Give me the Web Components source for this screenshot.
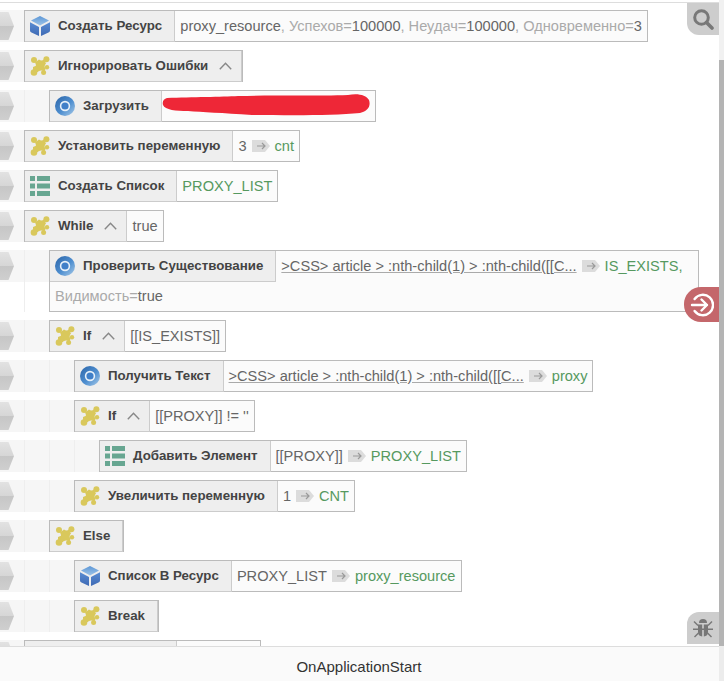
<!DOCTYPE html>
<html>
<head>
<meta charset="utf-8">
<title>OnApplicationStart</title>
<style>
  html, body { margin: 0; background: #fff; }
  .scribble { display: inline-block; vertical-align: top; margin: 3px 0 0 -5px; }
</style>
</head>
<body>
<flow-app tab="OnApplicationStart">
  <flow-row icon="cube" label="Создать Ресурс">proxy_resource<span class="lbl">, Успехов=</span>100000<span class="lbl">, Неудач=</span>100000<span class="lbl">, Одновременно=</span>3</flow-row>
  <flow-row icon="puzzle" label="Игнорировать Ошибки" open></flow-row>
  <flow-row depth="1" icon="chrome" label="Загрузить"><svg class="scribble" width="208" height="24" viewBox="0 0 208 24"><path fill="#ee2737" d="M5 4 C30 3 60 3 76 2 C110 1 160 2 186 1 C196 -1 204 1 207 6 C209 12 206 17 198 19 C170 22 120 21 90 21 C60 19 40 18 26 17 C14 17 3 16 1 11 C0 7 2 5 5 4Z"/></svg></flow-row>
  <flow-row icon="puzzle" label="Установить переменную">3<flow-arrow></flow-arrow><span class="out">cnt</span></flow-row>
  <flow-row icon="list" label="Создать Список"><span class="out">PROXY_LIST</span></flow-row>
  <flow-row icon="puzzle" label="While" open>true</flow-row>
  <flow-row depth="1" icon="chrome" label="Проверить Существование"><span class="sel">&gt;CSS&gt; article &gt; :nth-child(1) &gt; :nth-child([[C...</span><flow-arrow></flow-arrow><span class="out">IS_EXISTS,</span> <span class="lbl">Видимость=</span>true</flow-row>
  <flow-row depth="1" icon="puzzle" label="If" open>[[IS_EXISTS]]</flow-row>
  <flow-row depth="2" icon="chrome" label="Получить Текст"><span class="sel">&gt;CSS&gt; article &gt; :nth-child(1) &gt; :nth-child([[C...</span><flow-arrow></flow-arrow><span class="out">proxy</span></flow-row>
  <flow-row depth="2" icon="puzzle" label="If" open>[[PROXY]] != ''</flow-row>
  <flow-row depth="3" icon="list" label="Добавить Элемент">[[PROXY]]<flow-arrow></flow-arrow><span class="out">PROXY_LIST</span></flow-row>
  <flow-row depth="2" icon="puzzle" label="Увеличить переменную">1<flow-arrow></flow-arrow><span class="out">CNT</span></flow-row>
  <flow-row depth="1" icon="puzzle" label="Else"></flow-row>
  <flow-row depth="2" icon="cube" label="Список В Ресурс">PROXY_LIST<flow-arrow></flow-arrow><span class="out">proxy_resource</span></flow-row>
  <flow-row depth="2" icon="puzzle" label="Break"></flow-row>
  <flow-row style="--title-w:151px" icon="none" label=""><span style="display:inline-block;width:73px"></span></flow-row>
</flow-app>

<script>
const ICONS = {
  cube: `<svg width="20" height="20" viewBox="0 0 20 20"><defs><linearGradient id="t" x1="0" y1="0" x2="0" y2="1"><stop offset="0" stop-color="#5d97d6"/><stop offset="1" stop-color="#9cc3e8"/></linearGradient><linearGradient id="s" x1="0" y1="0" x2="0" y2="1"><stop offset="0" stop-color="#5a8cd2"/><stop offset="1" stop-color="#3d69b4"/></linearGradient></defs><path fill="url(#t)" d="M10 0 L19 4.6 L10 9.4 L1 4.6Z"/><path fill="url(#s)" d="M0 6.2 L9 11 V20 L1.5 16.5 Q0 15.8 0 14.5Z"/><path fill="url(#s)" d="M20 6.2 L11 11 V20 L18.5 16.5 Q20 15.8 20 14.5Z"/></svg>`,
  puzzle: `<svg width="20" height="20" viewBox="0 0 20 20"><g fill="#d9c85c"><path d="M5 6.5 L9 3.5 Q11.5 5.5 14 3.5 L16 7.5 Q13.5 10 15.5 13 L14.5 15.5 Q11 13.5 8.5 15.5 L5 14 Q7 10 5 6.5Z"/><circle cx="4" cy="4" r="3"/><circle cx="16.4" cy="3.2" r="3"/><circle cx="17" cy="11.3" r="2.2"/><circle cx="4" cy="16.5" r="3.3"/><circle cx="13.6" cy="16.4" r="2.5"/><path d="M3 11 L8 9 L8 16 L3 16Z"/></g></svg>`,
  chrome: `<svg width="20" height="20" viewBox="0 0 20 20"><defs><linearGradient id="c" x1="0" y1="0" x2="1" y2="1"><stop offset="0" stop-color="#2a64a8"/><stop offset=".55" stop-color="#4f8fd0"/><stop offset="1" stop-color="#a9cbe8"/></linearGradient></defs><circle cx="10" cy="10" r="10" fill="url(#c)"/><circle cx="10" cy="10" r="5.2" fill="#e8f1f9"/><circle cx="10" cy="10" r="3.6" fill="#3f7fc8"/></svg>`,
  list: `<svg width="20" height="20" viewBox="0 0 20 20"><g fill="#67a691"><rect x="0" y="0" width="5" height="5"/><rect x="7" y="0" width="13" height="5"/><rect x="0" y="7.5" width="5" height="5"/><rect x="7" y="7.5" width="13" height="5"/><rect x="0" y="15" width="5" height="5"/><rect x="7" y="15" width="13" height="5"/></g></svg>`,
  none: `<svg width="20" height="20"></svg>`
};

class FlowApp extends HTMLElement {
  constructor() {
    super();
    this.attachShadow({ mode: 'open' }).innerHTML = `
    <style>
      :host { display: flex; width: 724px; height: 681px; overflow: hidden; color: #666;
        font-family: "Liberation Sans", Arial, sans-serif; }
      .main { flex: 1; min-width: 0; display: flex; flex-direction: column; position: relative; padding-top: 2px; box-sizing: border-box; }
      .view { flex: 1; min-height: 0; overflow: hidden; border-top: 1px solid #ddd; padding-top: 7px; }
      .tab { flex: none; height: 34px; border-top: 1px solid #ddd; background: #fafafa; color: #333; font-size: 15px; line-height: 39px; text-align: center; padding-right: 1px; }
      .bar { width: 5px; display: flex; flex-direction: column; background: #ececec; }
      .bar i { display: block; }
      .bar .before { height: 60px; background: #f1f1f1; }
      .bar .thumb { height: 586px; background: #b4b4b4; }
      .tool { position: absolute; right: 0; display: flex; align-items: center; justify-content: center; background: #cdcdcd; box-sizing: border-box; }
      .search { top: 3px; width: 32px; height: 32px; border-bottom-left-radius: 12px; }
      .bug { top: 612px; width: 32px; height: 32px; border-top-left-radius: 12px; }
      .exit { top: 287px; width: 35px; height: 35px; background: #c4676b; border-radius: 17px 0 0 17px; }
    </style>
    <div class="main">
      <div class="view"><slot></slot></div>
      <div class="tab">${this.getAttribute('tab')}</div>
      <div class="tool search"><svg width="22" height="22" viewBox="0 0 22 22" fill="none" stroke="#787878"><circle cx="9.5" cy="9.5" r="6.8" stroke-width="3"/><path d="M14.5 14.5 L20 20" stroke-width="3.6" stroke-linecap="round"/></svg></div>
      <div class="tool exit"><svg width="24" height="24" viewBox="0 0 24 24" fill="none" stroke="#fff" stroke-width="2.4" stroke-linecap="round" stroke-linejoin="round"><path d="M4.6 6 A10.2 10.2 0 1 1 4.6 18"/><path d="M2 12 H17 M11.5 6.5 L17 12 L11.5 17.5"/></svg></div>
      <div class="tool bug"><svg width="22" height="22" viewBox="0 0 22 22" fill="#777"><path d="M7 6 A4 4 0 0 1 15 6Z"/><path d="M6 7.5 H10.2 V19.5 Q6 19 6 15Z"/><path d="M16 7.5 H11.8 V19.5 Q16 19 16 15Z"/><path d="M1 11.5 H21 V13 H1Z"/><path d="M2.5 4 L6.5 8 L5.5 9 L1.5 5Z M19.5 4 L15.5 8 L16.5 9 L20.5 5Z M6 15.5 L7 16.5 L3 20.5 L2 19.5Z M16 15.5 L15 16.5 L19 20.5 L20 19.5Z"/></svg></div>
    </div>
    <div class="bar"><i class="before"></i><i class="thumb"></i></div>`;
  }
}

class FlowRow extends HTMLElement {
  connectedCallback() {
    if (this.shadowRoot) return;
    const depth = +this.getAttribute('depth') || 0;
    const bare = this.childNodes.length === 0;
    const guides = '<i></i>'.repeat(depth);
    const chevron = this.hasAttribute('open')
      ? '<svg class="chev" width="13" height="8" viewBox="0 0 13 8" fill="none" stroke="#888" stroke-width="1.4"><path d="M0.8 7.2 L6.5 1.2 L12.2 7.2"/></svg>' : '';
    this.attachShadow({ mode: 'open' }).innerHTML = `
    <style>
      :host { display: flex; padding: 0 20px 8px 0; }
      .lead { flex: none; display: flex; background: linear-gradient(#f6f6f6, #f6f6f6) no-repeat 0 0 / 100% 32px; }
      .grip { width: 24px; height: 32px; display: block; }
      .lead i { width: 24px; border-left: 1px solid #eee; }
      .box { flex: 0 1 auto; min-width: 0; display: flow-root; border: 1px solid #bbb; background: #fbfbfb; box-sizing: border-box;
        padding: 0 ${bare ? 0 : 5}px; font-size: 14.6px; line-height: 30px; color: #666; }
      .title { float: left; height: 30px; margin: 0 ${bare ? 0 : 5}px -1px ${bare ? 0 : -5}px; width: var(--title-w, auto); background: #eee;
        border-right: 1px solid #ccc; border-bottom: 1px solid #ccc; display: flex; align-items: center; padding: 0 12px 0 5px;
        font-size: 13.3px; font-weight: bold; color: #444; white-space: nowrap; }
      :host([icon="none"]) .title { padding: 0; }
      .title svg:first-child { margin-right: 8px; flex: none; }
      .chev { margin: 0 -3px 0 11px; }
      ::slotted(.lbl) { color: #aaa; }
      ::slotted(.out) { color: #56995f; }
      ::slotted(.sel) { color: #666; white-space: nowrap; text-decoration: underline; text-decoration-color: #aaa; }
    </style>
    <div class="lead">
      <svg class="grip" viewBox="0 0 24 32"><defs><linearGradient id="g" x1="0" y1="0" x2="0" y2="1"><stop offset="0" stop-color="#e2e2e2"/><stop offset=".5" stop-color="#d6d6d6"/><stop offset=".5" stop-color="#c6c6c6"/><stop offset="1" stop-color="#cfcfcf"/></linearGradient></defs><path fill="url(#g)" d="M0 2 H8.5 L14 16 L8.5 30 H0Z"/></svg>
      ${guides}
    </div>
    <div class="box"><div class="title">${ICONS[this.getAttribute('icon')]}<span>${this.getAttribute('label')}</span>${chevron}</div><slot></slot></div>`;
  }
}

class FlowArrow extends HTMLElement {
  constructor() {
    super();
    this.attachShadow({ mode: 'open' }).innerHTML = `
    <style>
      :host { display: inline-block; width: 18px; height: 12px; margin: 0 5px; vertical-align: -1px; }
      svg { display: block; }
    </style>
    <svg width="18" height="12" viewBox="0 0 18 12"><path fill="#dcdcdc" d="M0 0 H13 L18 6 L13 12 H0Z"/><path fill="none" stroke="#9a9a9a" stroke-width="1.2" d="M5 6 H13 M10 3 L13 6 L10 9"/></svg>`;
  }
}

customElements.define('flow-app', FlowApp);
customElements.define('flow-arrow', FlowArrow);
customElements.define('flow-row', FlowRow);
</script>
</body>
</html>
